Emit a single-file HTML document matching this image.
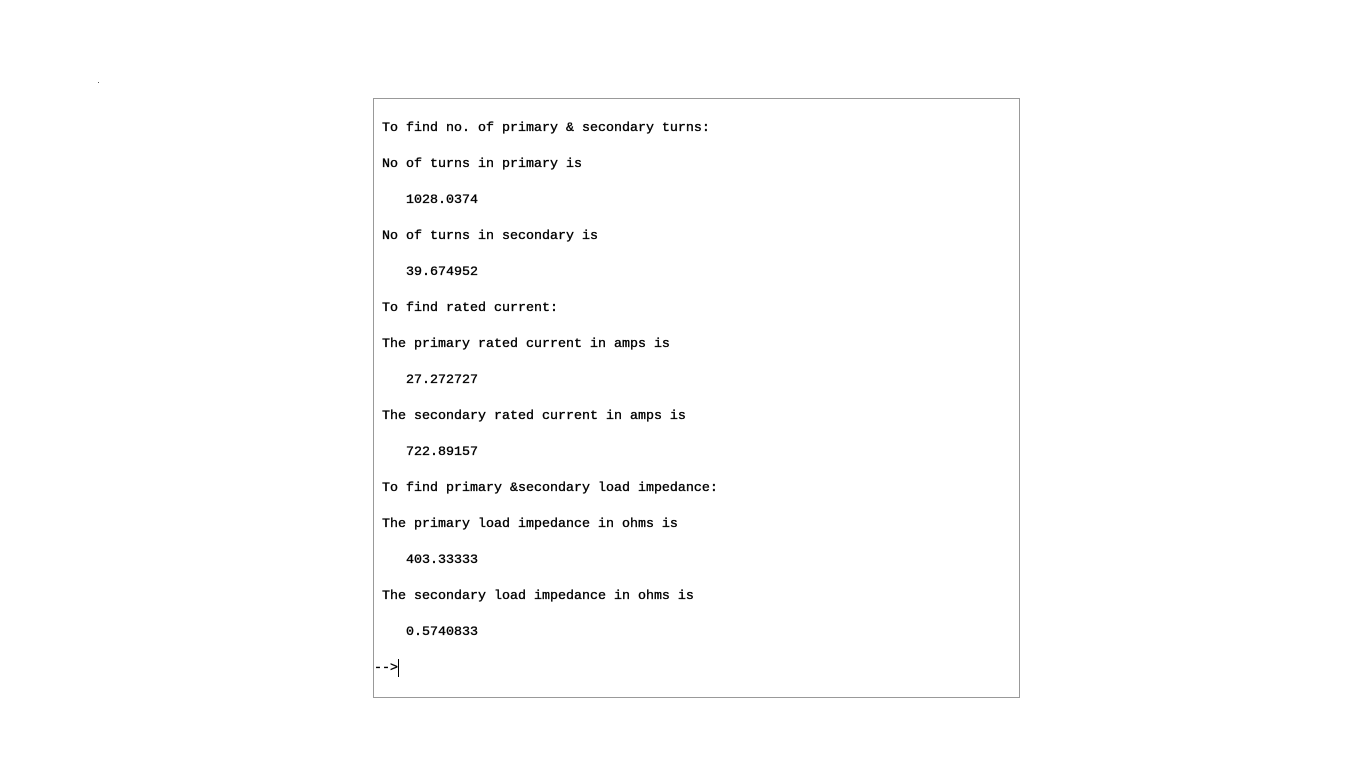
<!DOCTYPE html>
<html><head><meta charset="utf-8"><style>
body{margin:0;width:1366px;height:768px;background:#fff;position:relative;overflow:hidden}
.box{position:absolute;left:373px;top:98px;width:645px;height:598px;border:1px solid #999;}
.l{position:absolute;left:8px;font-family:"Liberation Mono",monospace;font-size:13.33px;line-height:16px;white-space:pre;color:#000;-webkit-text-stroke:0.35px #000}
.cur{position:absolute;left:24px;top:560px;width:1px;height:18px;background:#000}
.dot{position:absolute;left:98px;top:82px;width:1px;height:1px;background:#555}
</style></head><body>
<div class="dot"></div>
<div class="box">
<div class="l" style="top:22px">To find no. of primary &amp; secondary turns:</div>
<div class="l" style="top:58px">No of turns in primary is</div>
<div class="l" style="top:94px">   1028.0374</div>
<div class="l" style="top:130px">No of turns in secondary is</div>
<div class="l" style="top:166px">   39.674952</div>
<div class="l" style="top:202px">To find rated current:</div>
<div class="l" style="top:238px">The primary rated current in amps is</div>
<div class="l" style="top:274px">   27.272727</div>
<div class="l" style="top:310px">The secondary rated current in amps is</div>
<div class="l" style="top:346px">   722.89157</div>
<div class="l" style="top:382px">To find primary &amp;secondary load impedance:</div>
<div class="l" style="top:418px">The primary load impedance in ohms is</div>
<div class="l" style="top:454px">   403.33333</div>
<div class="l" style="top:490px">The secondary load impedance in ohms is</div>
<div class="l" style="top:526px">   0.5740833</div>
<div class="l" style="top:562px;left:0">--&gt;</div>
<div class="cur"></div>
</div>
</body></html>
